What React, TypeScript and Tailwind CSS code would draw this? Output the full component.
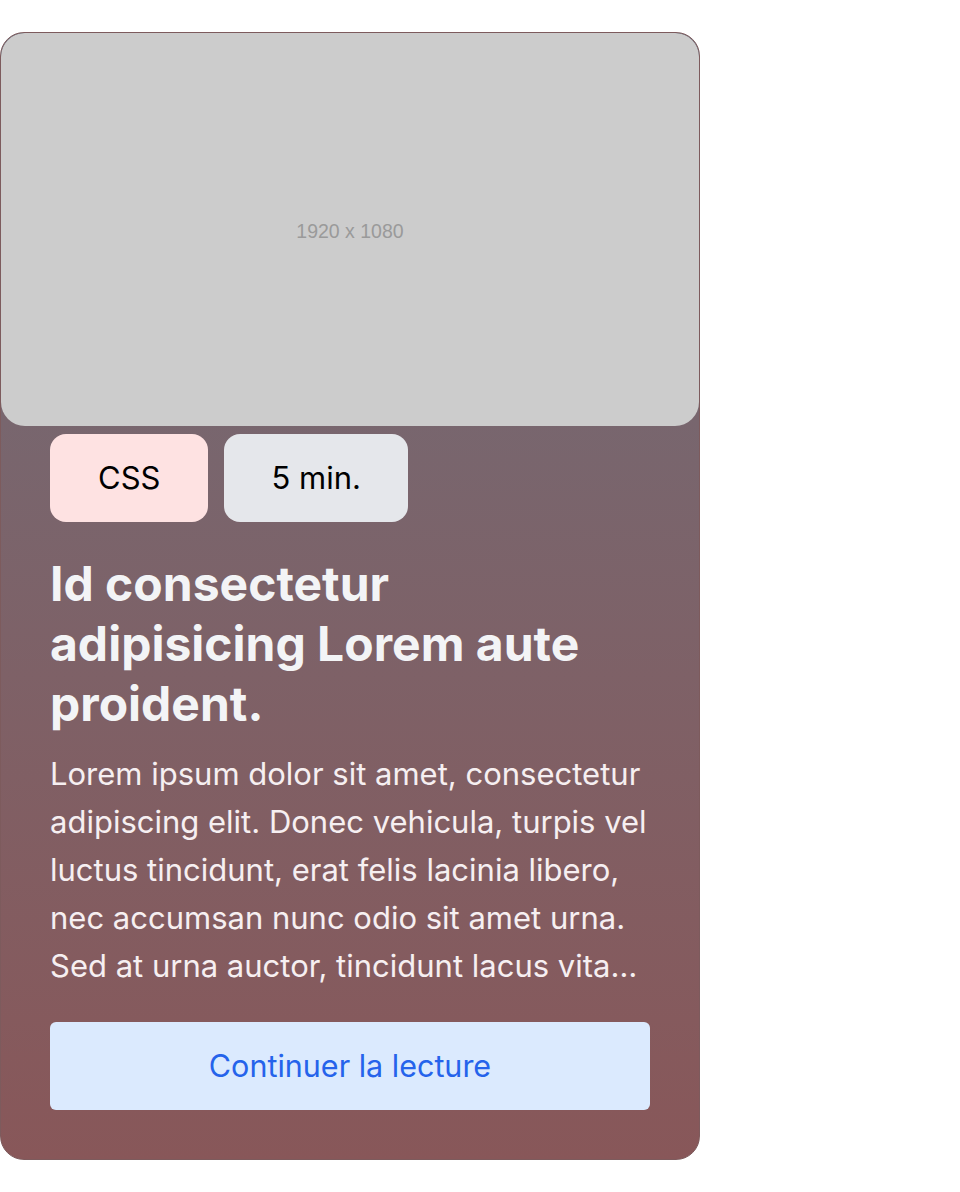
const tags = [
  { label: "CSS", className: "bg-[#fee2e2] px-[48px]" },
  { label: "5 min.", className: "bg-[#e5e7eb] px-[47px]" },
];

export default function App() {
  return (
    <div className="min-h-screen bg-white pt-8 font-['Inter',sans-serif]">
      <article className="flex w-[700px] flex-col overflow-hidden rounded-3xl border border-[#7d5b5d] bg-gradient-to-b from-[#6e6d79] to-[#885759]">
        <div className="flex aspect-video w-full items-center justify-center rounded-3xl bg-[#cccccc] pt-1">
          <span className="font-['Liberation_Sans',Arial,sans-serif] text-[19.5px] text-[#9a9a9a]">1920 x 1080</span>
        </div>

        <div className="flex flex-col px-[49px] pb-[49px] pt-2">
          <div className="flex gap-4">
            {tags.map((tag) => (
              <span
                key={tag.label}
                className={`rounded-2xl py-6 text-[31px] leading-10 text-black ${tag.className}`}
              >
                {tag.label}
              </span>
            ))}
          </div>

          <h2 className="mt-8 text-[48px] font-bold leading-[60px] text-[#f3f4f6]">
            Id consectetur adipisicing Lorem aute proident.
          </h2>

          <p className="mt-4 line-clamp-5 text-[31px] leading-[48px] text-[#f6eff1]">
            Lorem ipsum dolor sit amet, consectetur adipiscing elit. Donec vehicula, turpis vel luctus tincidunt, erat
            felis lacinia libero, nec accumsan nunc odio sit amet urna. Sed at urna auctor, tincidunt lacus vitae,
            fermentum nisl. Nulla facilisi.
          </p>

          <button className="mt-8 h-[88px] w-full rounded-md bg-[#dbeafe] text-[30.5px] text-[#2563eb]">
            Continuer la lecture
          </button>
        </div>
      </article>
    </div>
  );
}
